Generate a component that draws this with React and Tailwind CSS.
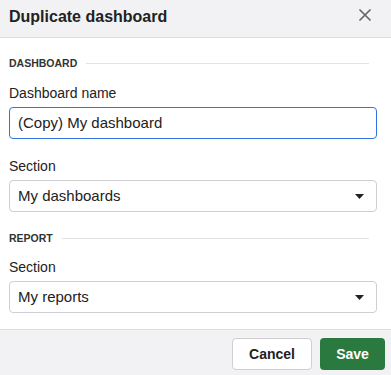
import React from 'react';

const SectionHeading = ({ title }) => (
    <div className="flex items-center h-[14px]">
        <span className="text-[10.5px] font-bold text-[#333] leading-none">{title}</span>
        <div className="flex-1 h-px bg-[#e3e3e5] ml-[9px] mr-[8px]" />
    </div>
);

const Caret = () => (
    <svg width="9" height="5" viewBox="0 0 9 5" className="shrink-0">
        <path d="M0 0 H9 L4.5 5 Z" fill="#222" />
    </svg>
);

const SelectBox = ({ value }) => (
    <div className="flex items-center justify-between h-[32px] border border-[#cfcfd2] rounded-[4px] bg-white pl-[8px] pr-[12px]">
        <span className="text-[15px] text-[#222]">{value}</span>
        <Caret />
    </div>
);

const Label = ({ children, className = '' }) => (
    <div className={`text-[14px] leading-[20px] text-[#222] ${className}`}>{children}</div>
);

export default function App() {
    return (
        <div className="w-[391px] h-[375px] bg-white flex flex-col overflow-hidden" style={{ fontFamily: '"Liberation Sans", Arial, sans-serif' }}>
            {/* Header */}
            <div className="h-[38px] bg-[#f2f2f4] border-b border-[#dedee0] flex items-center justify-between pl-[9px] pr-[20px] shrink-0">
                <h2 className="text-[16px] font-bold text-[#222] -mt-[10px] leading-none pt-[6px]">Duplicate dashboard</h2>
                <svg width="12" height="12" viewBox="0 0 12 12" className="-mt-[8px]">
                    <path d="M1 1 L11 11 M11 1 L1 11" stroke="#666" strokeWidth="1.7" strokeLinecap="round" />
                </svg>
            </div>

            {/* Body */}
            <div className="flex-1 flex flex-col pl-[9px] pr-[14px] pt-[18px]">
                <SectionHeading title="DASHBOARD" />
                <Label className="mt-[13px]">Dashboard name</Label>
                <div className="mt-[4px] h-[32px] border-[1.5px] border-[#3174e0] rounded-[4px] flex items-center pl-[8px]">
                    <span className="text-[15px] text-[#222]">(Copy) My dashboard</span>
                </div>
                <Label className="mt-[17px]">Section</Label>
                <div className="mt-[4px]">
                    <SelectBox value="My dashboards" />
                </div>
                <div className="mt-[19px]">
                    <SectionHeading title="REPORT" />
                </div>
                <Label className="mt-[12px]">Section</Label>
                <div className="mt-[4px]">
                    <SelectBox value="My reports" />
                </div>
            </div>

            {/* Footer */}
            <div className="h-[46px] bg-[#f2f2f4] border-t border-[#dedee0] flex justify-end items-start gap-[8px] pt-[8px] pr-[6px] shrink-0">
                <button className="h-[32px] w-[80px] bg-white border border-[#cfcfd2] rounded-[4px] text-[14px] font-bold text-[#222]">
                    Cancel
                </button>
                <button className="h-[32px] w-[65px] bg-[#2a7a40] rounded-[4px] text-[14px] font-bold text-white">
                    Save
                </button>
            </div>
        </div>
    );
}
